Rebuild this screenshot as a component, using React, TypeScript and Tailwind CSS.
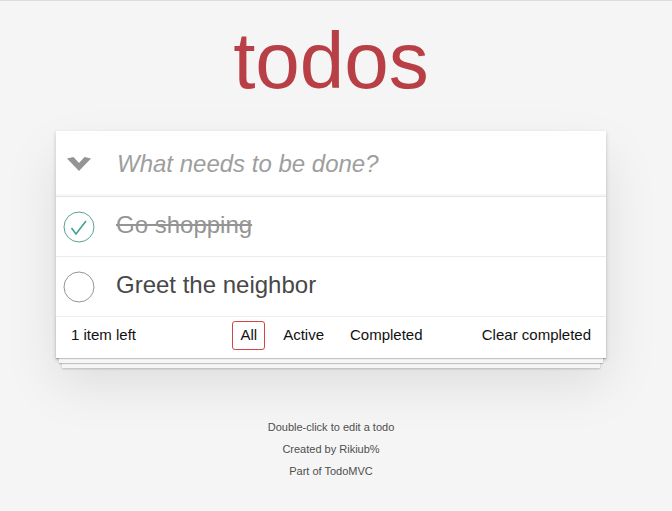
const font = { fontFamily: '"Liberation Sans", Arial, sans-serif' };

type Todo = { title: string; done: boolean };

const todos: Todo[] = [
  { title: "Go shopping", done: true },
  { title: "Greet the neighbor", done: false },
];

function Toggle({ done }: { done: boolean }) {
  return (
    <svg width="40" height="40" viewBox="0 0 40 40" className="shrink-0">
      <circle cx="20" cy="20" r="15" fill="none" stroke={done ? "#59a193" : "#949494"} strokeWidth="1" />
      {done && <polyline points="12.5,21 17,27 27,14" fill="none" stroke="#3ea390" strokeWidth="1.6" />}
    </svg>
  );
}

export default function App() {
  return (
    <div className="min-h-screen bg-[#f5f5f5] border-t border-[#dcdcdc] text-[#111]" style={font}>
      <div className="flex flex-col items-center pr-[10px]">
        <h1 className="mt-[20px] mb-[30px] text-[80px] leading-[80px] text-[#b83f45] font-normal">todos</h1>

        <section className="w-[550px] bg-white shadow-[0_2px_4px_0_rgba(0,0,0,0.2),0_25px_50px_0_rgba(0,0,0,0.1)]">
          <header className="h-[65px] flex items-center shadow-[inset_0_-2px_1px_rgba(0,0,0,0.03)]">
            <div className="w-[60px] flex justify-center pr-[14px] pt-[2px]">
              <svg width="24" height="15" viewBox="0 0 24 15">
                <polygon points="0,1.5 6.5,0 12,6 17.5,0 24,1.5 12,14" fill="#949494" />
              </svg>
            </div>
            <span className="text-[24px] italic text-[#9e9e9e] pl-[1px]">What needs to be done?</span>
          </header>

          <ul className="border-t border-[#e6e6e6]">
            {todos.map((t) => (
              <li key={t.title} className="h-[60px] flex items-center border-b border-[#ededed] pl-[3px]">
                <Toggle done={t.done} />
                <span
                  className={
                    "ml-[17px] pb-[4px] text-[24px] " + (t.done ? "line-through text-[#949494]" : "text-[#484848]")
                  }
                >
                  {t.title}
                </span>
              </li>
            ))}
          </ul>

          <footer className="h-[41px] px-[15px] pb-[4px] grid grid-cols-[1fr_auto_1fr] items-center text-[15px] shadow-[0_1px_1px_rgba(0,0,0,0.2),0_8px_0_-3px_#f6f6f6,0_9px_1px_-3px_rgba(0,0,0,0.2),0_16px_0_-6px_#f6f6f6,0_17px_2px_-6px_rgba(0,0,0,0.2)]">
            <span className="justify-self-start">1 item left</span>
            <div className="flex gap-[10px] pl-[1px]">
              <span className="px-[7px] py-[2px] border border-[#ce4646] rounded-[3px]">All</span>
              <span className="px-[7px] py-[2px] border border-transparent">Active</span>
              <span className="px-[7px] py-[2px] border border-transparent">Completed</span>
            </div>
            <span className="justify-self-end">Clear completed</span>
          </footer>
        </section>

        <div className="mt-[64px] flex flex-col items-center gap-[11px] text-[11px] leading-[11px] text-[#4d4d4d] [text-shadow:0_1px_0_rgba(255,255,255,0.5)]">
          <p>Double-click to edit a todo</p>
          <p>Created by Rikiub%</p>
          <p>Part of TodoMVC</p>
        </div>
      </div>
    </div>
  );
}
